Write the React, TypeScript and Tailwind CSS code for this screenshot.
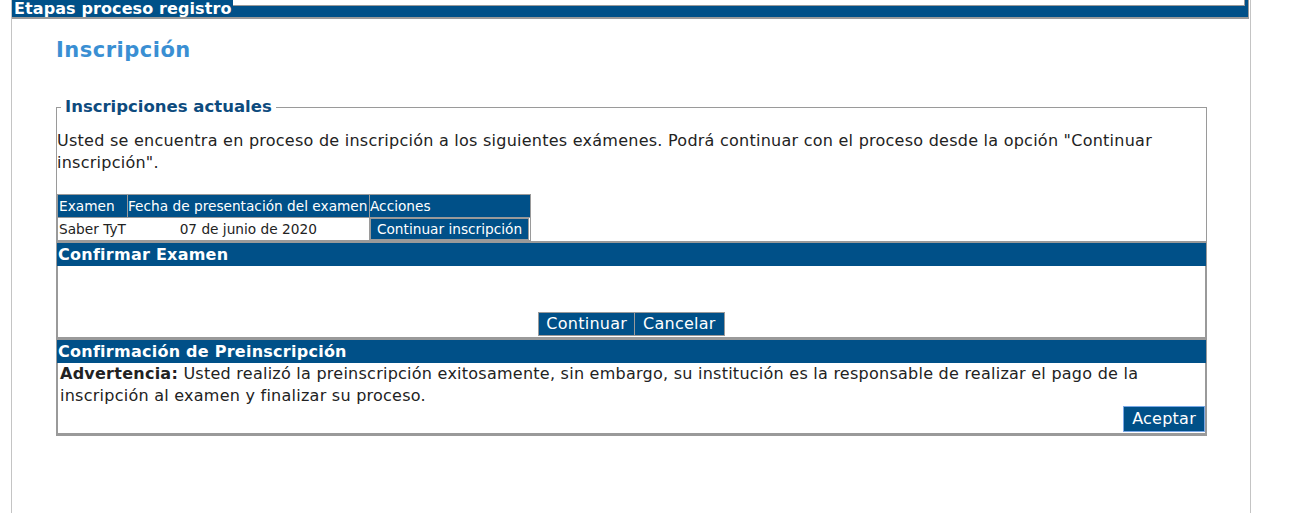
export default function App() {
  return (
    <div className="min-h-[513px] bg-white font-['DejaVu_Sans',Verdana,sans-serif] text-[#222]">
      <div className="ml-[11px] min-h-[513px] w-[1240px] border-x border-[#c4c4c4]">
        {/* stage header, scrolled partly out of view */}
        <div className="relative mr-[1px] h-[19px] overflow-hidden border-r border-[#9a9a9a]">
          <div className="flex h-[6px]">
            <div className="w-[221px] bg-[#005088]" />
            <div className="flex-1 border-b border-r border-[#9a9a9a] bg-white" />
            <div className="w-[3px] bg-[#005088]" />
          </div>
          <div className="h-[11px] bg-[#005088]" />
          <div className="h-[2px] bg-[#9a9a9a]" />
          <span className="absolute left-[2px] top-[-1px] text-[16px] font-bold leading-[20px] tracking-[0.1px] text-white">
            Etapas proceso registro
          </span>
        </div>

        <div className="pl-[44px] pr-[43px]">
          <h1 className="mt-[19px] text-[21px] font-bold leading-[24px] tracking-[0.5px] text-[#3a8fd3]">
            Inscripción
          </h1>

          <fieldset className="mt-[35px] border border-[#9a9a9a]">
            <legend className="ml-[4px] px-[4px] text-[16.5px] font-bold leading-[20px] text-[#0d4b7e]">
              Inscripciones actuales
            </legend>
            <p className="mt-[13px] text-[16px] leading-[22px] tracking-[0.25px]">
              Usted se encuentra en proceso de inscripción a los siguientes exámenes. Podrá continuar con el proceso
              desde la opción "Continuar inscripción".
            </p>

            <table className="mt-[20px] w-[474px] table-fixed border-collapse border border-[#9a9a9a] text-[13.7px] leading-[20px]">
              <colgroup>
                <col className="w-[70px]" />
                <col className="w-[242px]" />
                <col />
              </colgroup>
              <thead>
                <tr className="h-[23px] bg-[#005088] text-left text-white">
                  <th className="border border-[#9a9a9a] px-[1px] font-normal">Examen</th>
                  <th className="whitespace-nowrap border border-[#9a9a9a] px-0 font-normal">
                    Fecha de presentación del examen
                  </th>
                  <th className="border border-[#9a9a9a] px-0 font-normal">Acciones</th>
                </tr>
              </thead>
              <tbody>
                <tr className="h-[22px]">
                  <td className="whitespace-nowrap border-y border-[#9a9a9a] px-[1px]">Saber TyT</td>
                  <td className="whitespace-nowrap border-y border-[#9a9a9a] text-center">07 de junio de 2020</td>
                  <td className="border border-[#9a9a9a] p-0 pr-[1px]">
                    <button className="h-[22px] w-full whitespace-nowrap border border-[#9a9a9a] bg-[#005088] text-[13.7px] text-white">
                      Continuar inscripción
                    </button>
                  </td>
                </tr>
              </tbody>
            </table>

            <div className="border-t-2 border-[#9a9a9a]">
              <div className="h-[23px] bg-[#005088] px-[1px] text-[16px] font-bold leading-[23px] tracking-[0.25px] text-white">
                Confirmar Examen
              </div>
              <div className="flex h-[71px] items-end justify-center border-x border-[#9a9a9a] pb-[1px]">
                <button className="h-[24px] border border-[#9a9a9a] bg-[#005088] px-[7px] text-[16px] leading-[20px] tracking-[0.25px] text-white">
                  Continuar
                </button>
                <button className="h-[24px] border border-l-0 border-[#9a9a9a] bg-[#005088] px-[8px] text-[16px] leading-[20px] tracking-[0.25px] text-white">
                  Cancelar
                </button>
              </div>
            </div>

            <div className="border-t-[3px] border-[#9a9a9a]">
              <div className="h-[23px] bg-[#005088] px-[1px] text-[16px] font-bold leading-[23px] tracking-[0.25px] text-white">
                Confirmación de Preinscripción
              </div>
              <div className="flex h-[72px] flex-col border-x border-b-2 border-[#9a9a9a] pl-[2px]">
                <p className="text-[16px] leading-[22px] tracking-[0.25px]">
                  <b>Advertencia:</b> Usted realizó la preinscripción exitosamente, sin embargo, su institución es la
                  responsable de realizar el pago de la inscripción al examen y finalizar su proceso.
                </p>
                <button className="mt-[-1px] h-[26px] self-end border border-[#7aa8e6] bg-[#005088] px-[8px] text-[16px] leading-[20px] tracking-[0.25px] text-white">
                  Aceptar
                </button>
              </div>
            </div>
          </fieldset>
        </div>
      </div>
    </div>
  );
}
